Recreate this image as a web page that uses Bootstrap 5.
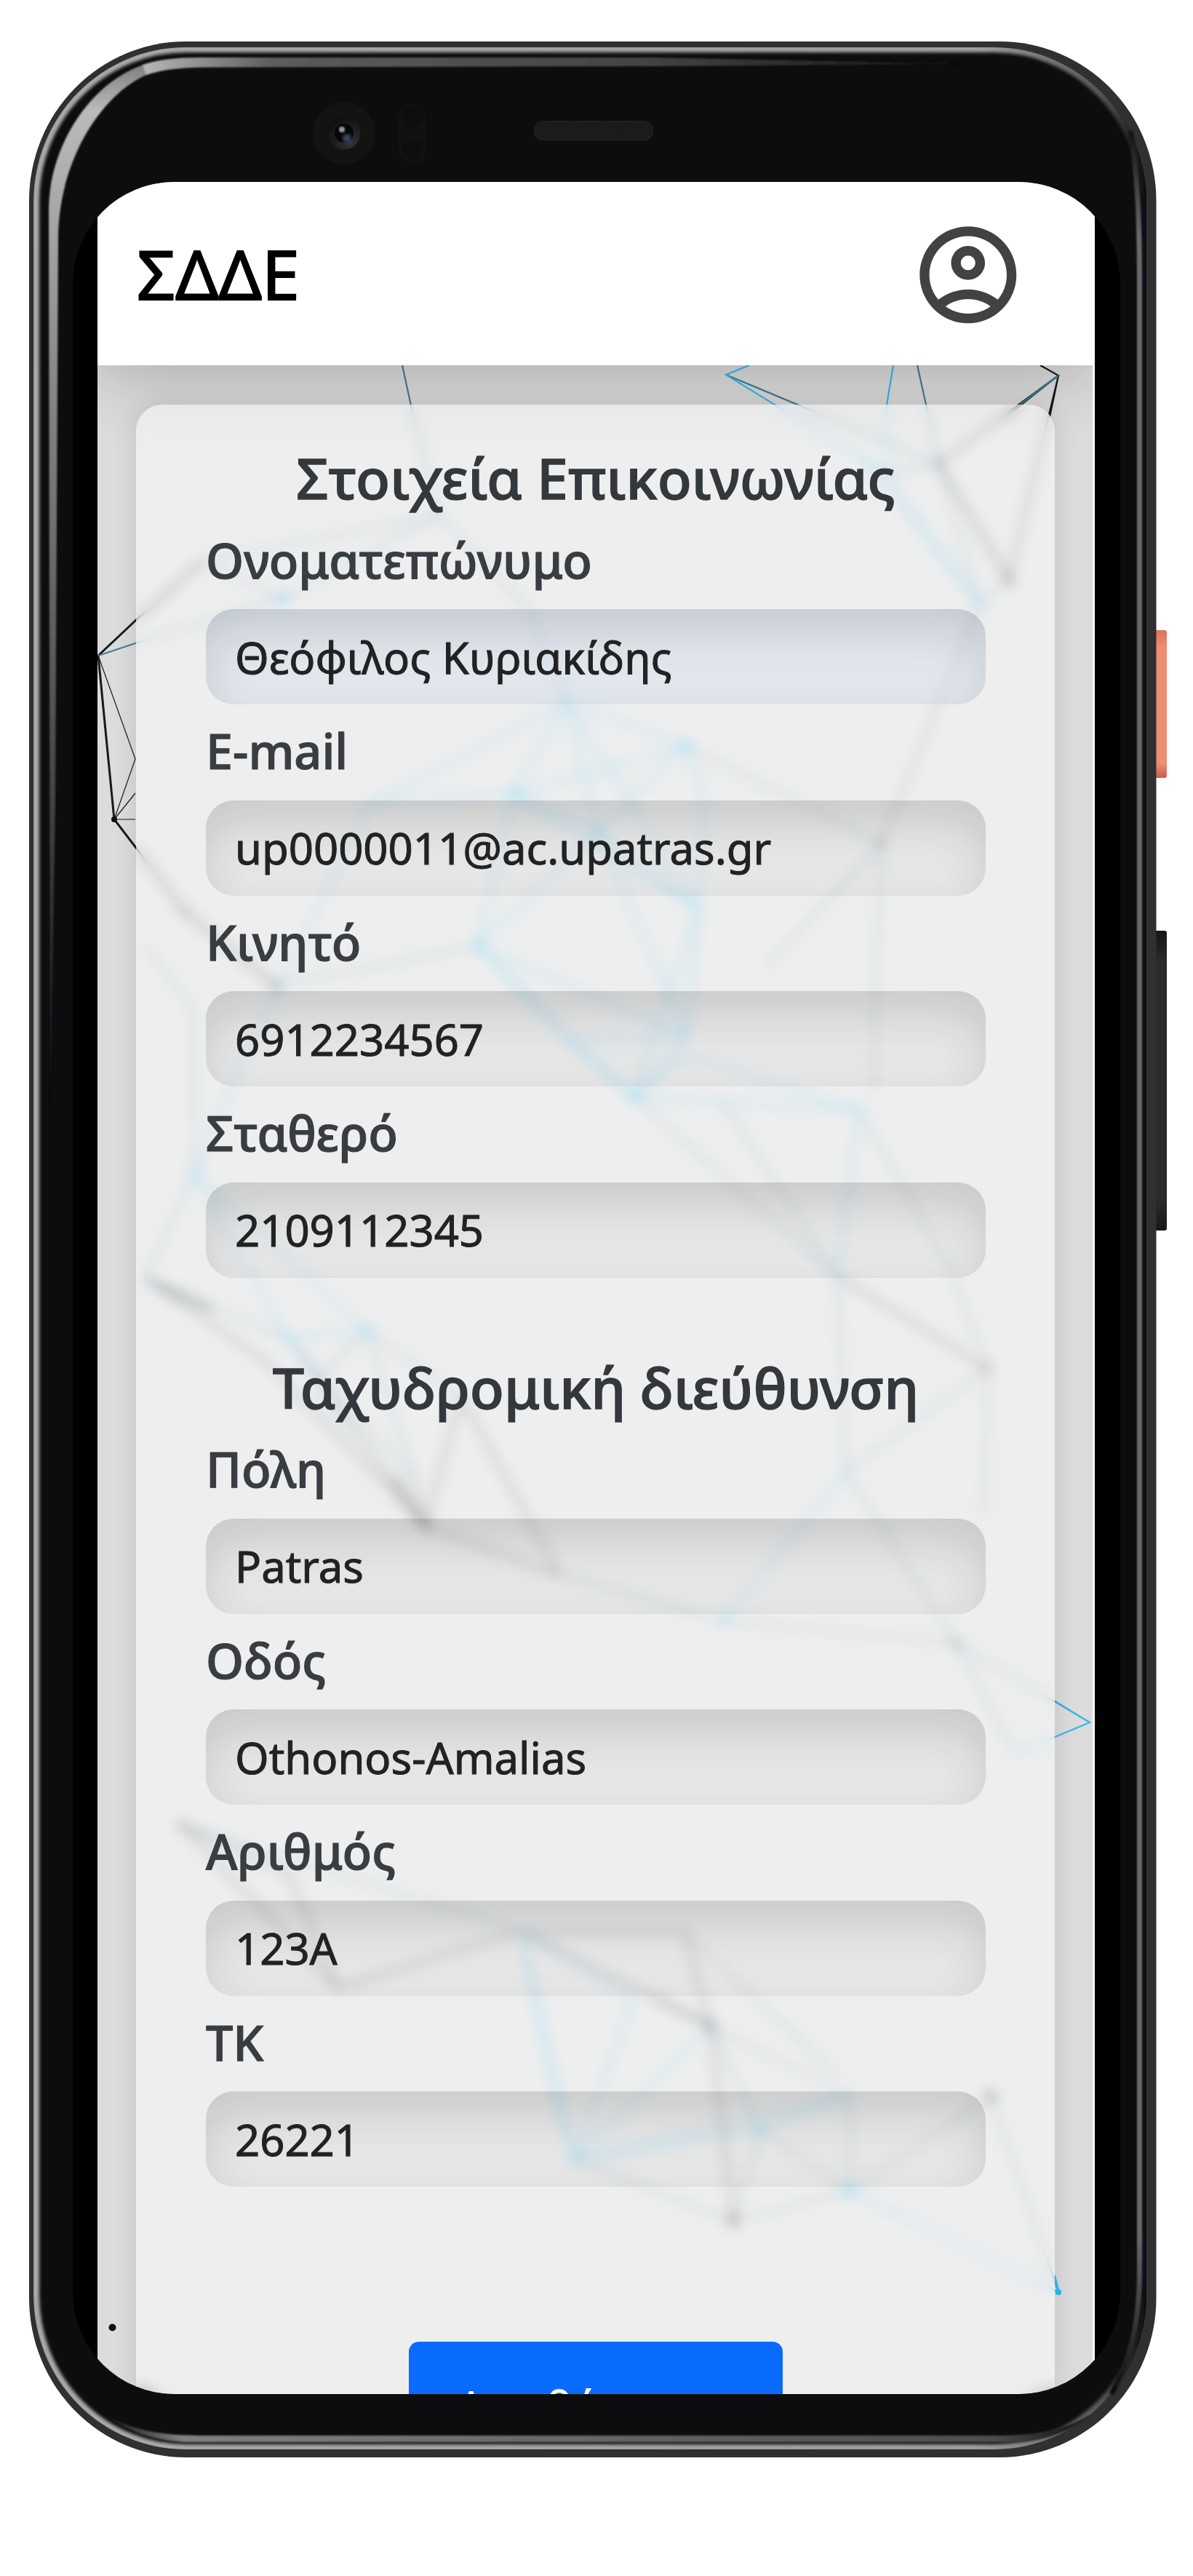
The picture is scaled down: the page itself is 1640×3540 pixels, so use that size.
<!DOCTYPE html>
<html lang="el">
<head>
<meta charset="utf-8">
<title>ΣΔΔΕ</title>
<link href="https://cdn.jsdelivr.net/npm/bootstrap@5.3.0/dist/css/bootstrap.min.css" rel="stylesheet">
<style>
body{background:#fff;font-family:"Noto Sans",sans-serif;overflow:hidden}
.phone{width:1564px;height:3320px;margin:57px 0 0 40px;padding:193px 0 0 60px}
.phone-frame{left:0;top:0}
.screen{width:1440px;height:3040px;border-radius:140px;background:#000;padding:0 35px 0 34px}
.screen-view{width:1371px;height:3040px;background:#dcdcdc;border-right:3px solid #fff}
.topbar{height:252px;background:#fff;padding:0 91.500px 0 54px;box-shadow:0 12px 100px rgba(0,0,0,.24)}
.topbar svg{margin-top:3px}
.brand-name{font-size:93px;line-height:1;color:#000;-webkit-text-stroke:2px #000}
.net{left:0;top:0}
.panel{margin:54px 52px 0 53px;height:2760px;padding:53px 95px 0 96px;border-radius:36px;background:rgba(255,255,255,.5);backdrop-filter:blur(9px);box-shadow:0 0 34px rgba(0,0,0,.12)}
.panel h2{font-size:77.100px;line-height:95px;margin-bottom:14.500px;font-weight:500;color:#33383d;-webkit-text-stroke:1.400px #33383d;white-space:nowrap}
.panel .form-label{font-size:66.500px;line-height:100px;margin-bottom:18.500px;font-weight:500;color:#383d42;-webkit-text-stroke:1.200px #383d42}
.panel .form-control{height:131px;font-size:59.800px;padding:0 40px;border:0;border-radius:38px;color:#222;background:rgba(0,0,0,.03);box-shadow:inset 0 30px 64px rgba(0,0,0,.13);-webkit-text-stroke:1px #222}
.panel .form-control.auto{background:rgba(190,208,240,.24)}
.field{margin-bottom:13px}
.group-gap{margin-top:103px}
.save{width:514px;height:145px;margin-top:213px;font-size:65px;border-radius:14px;background:#0a6cff;border:0;line-height:1.5;padding:36px 0 0}
</style>
<script src="https://cdn.jsdelivr.net/npm/bootstrap@5.3.0/dist/js/bootstrap.bundle.min.js"></script>
</head>
<body>
<div class="phone position-relative">
<svg class="phone-frame position-absolute" width="1564" height="3320" viewBox="40 57 1564 3320">
<defs>
<linearGradient id="red" x2="0" y2="1"><stop stop-color="#dd735d"/><stop offset=".12" stop-color="#ee8e74"/><stop offset=".9" stop-color="#ee8e74"/><stop offset="1" stop-color="#c65f4e"/></linearGradient>
<linearGradient id="blk" x2="0" y2="1"><stop stop-color="#151515"/><stop offset=".1" stop-color="#2a2a2a"/><stop offset=".9" stop-color="#2a2a2a"/><stop offset="1" stop-color="#181818"/></linearGradient>
<linearGradient id="rim" gradientUnits="userSpaceOnUse" x1="46" x2="1576" y1="0" y2="0"><stop stop-color="#aaa"/><stop offset=".85" stop-color="#a0a0a0"/><stop offset=".96" stop-color="#555"/><stop offset="1" stop-color="#0d0d0f"/></linearGradient>
<linearGradient id="bandL" gradientUnits="userSpaceOnUse" x1="0" x2="0" y1="79" y2="1550"><stop stop-color="#777"/><stop offset=".05" stop-color="#bbb"/><stop offset=".3" stop-color="#888"/><stop offset="1" stop-color="#0d0d0f"/></linearGradient>
<linearGradient id="bandT" gradientUnits="userSpaceOnUse" x1="190" x2="1350" y1="0" y2="0"><stop stop-color="#bbb"/><stop offset=".16" stop-color="#5c5c5c"/><stop offset=".6" stop-color="#444"/><stop offset="1" stop-color="#0d0d0f"/></linearGradient>
<linearGradient id="bandR" gradientUnits="userSpaceOnUse" x1="0" x2="0" y1="170" y2="3290"><stop stop-color="#0d0d0f"/><stop offset=".05" stop-color="#6a6a6a"/><stop offset=".93" stop-color="#6a6a6a"/><stop offset="1" stop-color="#0d0d0f"/></linearGradient>
<linearGradient id="bandB" gradientUnits="userSpaceOnUse" x1="140" x2="1500" y1="0" y2="0"><stop stop-color="#0d0d0f"/><stop offset=".08" stop-color="#808080"/><stop offset=".9" stop-color="#4e4e4e"/><stop offset="1" stop-color="#0d0d0f"/></linearGradient>
<radialGradient id="lens" cx=".7" cy=".8" r=".9"><stop stop-color="#333338"/><stop offset="1" stop-color="#0c0c0e"/></radialGradient>
<pattern id="mesh" width="4" height="4" patternUnits="userSpaceOnUse"><rect width="4" height="4" fill="#111"/><path d="M0 0L4 4M4 0L0 4" stroke="#2b2b2b" stroke-width=".8"/></pattern>
<filter id="s1" x="-5%" y="-5%" width="110%" height="110%"><feGaussianBlur stdDeviation="2.2"/></filter>
<filter id="s2" x="-5%" y="-5%" width="110%" height="110%"><feGaussianBlur stdDeviation=".8"/></filter>
<clipPath id="inner"><rect x="46" y="65" width="1530" height="3301" rx="209" ry="212"/></clipPath>
</defs>
<rect x="1580" y="866" width="24" height="203" rx="3" fill="url(#red)"/>
<rect x="1580" y="1279" width="24" height="412" rx="3" fill="url(#blk)"/>
<rect x="40" y="57" width="1549.500" height="3320" rx="215" ry="219" fill="#303030"/>
<rect x="46" y="65" width="1530" height="3301" rx="209" ry="212" fill="#0d0d0f"/>
<g clip-path="url(#inner)"><rect x="49" y="67" width="1524" height="3297" rx="206" ry="210" fill="none" stroke="url(#rim)" stroke-width="10" filter="url(#s1)"/></g>
<g filter="url(#s2)">
<path d="M69 1550L67 290C67 200 125 112 200 88L206 101C145 124 80 215 80 330L76 1100Z" fill="url(#bandL)"/>
<path d="M196 89C220 81 245 79 275 79L900 79L1350 88L900 91L280 92.500C250 93 225 95 201 103Z" fill="url(#bandT)"/>
<path d="M1554 180C1564 240 1566.500 300 1566.500 400V3120C1566.500 3190 1555 3240 1528 3290" fill="none" stroke="url(#bandR)" stroke-width="7"/>
<path d="M140 3315C180 3340 220 3347 280 3347H1380C1430 3346 1465 3338 1500 3318C1465 3346 1430 3356 1390 3356H260C215 3355 175 3343 140 3315Z" fill="url(#bandB)"/>
</g>
<circle cx="473" cy="183" r="43" fill="#131313"/><circle cx="473" cy="183" r="22.500" fill="url(#lens)"/><circle cx="473" cy="183" r="13" fill="#060608"/>
<circle cx="477" cy="190" r="6" fill="#3a4468" filter="url(#s1)"/><circle cx="470" cy="178" r="4" fill="#999" filter="url(#s2)"/>
<rect x="548" y="143" width="37" height="82" rx="18.500" fill="#111112"/><circle cx="567" cy="161" r="14" fill="#0e0e0f"/><circle cx="567" cy="206" r="14" fill="#0e0e0f"/>
<rect x="734.500" y="166.500" width="163" height="26" rx="12" fill="url(#mesh)" stroke="#252525"/>
</svg>
<div class="screen overflow-hidden position-relative">
<div class="screen-view position-relative overflow-hidden">
<svg class="net position-absolute" width="1371" height="3040" viewBox="134 250 1371 3040" fill="none" stroke-width="2.200">
<g stroke="#151a1d">
<path d="M1430 502L1455 516L1290 637M1455 516L1387 797M1455 516L1380 575M1455 516L1443 573"/>
<path d="M1290 637L1387 797M186 853L135 901L157 1126L255 1254L379 1354M186 853L279 771" stroke-width="3"/>
<path d="M135 901L186 1043L157 1126L186 1090M157 1126H186" stroke-width="1.200"/>
<path d="M1211 1159L1347 831" stroke-width="1.300"/>
<path d="M1151 1754L1357 1880M633 1919L585 2098M568 2029L585 2098L769 2164M396 1839L585 2098M199 1756L364 1870L585 2098M633 1919L769 2164M940 2654L977 2784M716 2654L977 2784L1008 3052M250 2508L464 2732L716 2654L940 2654M396 2574L464 2732M250 2508L396 2574" stroke-width="2.200"/>
<path d="M200 1758L290 1800M540 2030L585 2098M900 2745L977 2784" stroke-width="4"/>
</g>
<g stroke="#3f7f98" stroke-width="2.200">
<path d="M553 502L571 585L604 708M1261 502L1273 556L1290 637M998 515L1290 637L1218 650M1402 556L1455 516M186 884L135 901"/>
<path d="M279 771L604 708L389 822L279 771M604 708L725 834L779 965M186 884L389 822M1347 831L1290 637M1387 797L1347 831M944 1025L1211 1159L1200 1500M1211 1159L1054 1327M379 1354L657 1300M199 1756L267 1613M199 1756L396 1839M1357 1880L1163 2023L1315 2258L1498 2367M1315 2258L1395 2410M994 2227L1315 2258M769 2164L994 2227M870 1507L1151 1754M990 1510L1151 1754M1181 1526L1305 1740L1357 1880L1352 2086M1151 1754L1163 2023M505 1829L633 1919M505 1829L568 2029M396 1839L568 2029M505 1829L430 1900M250 2508L716 2654M977 2784L1045 2927L1168 3011M1008 3052L1168 3011M790 2968L1008 3052L1045 2927M977 2784L1168 2880M940 2654L1150 2850M1362 2881L1455 3150M1362 2881L1168 3011L1168 2880M200 1300L265 1385L267 1613" stroke-width="1.900"/>
</g>
<g stroke="#35b9ee" stroke-width="2.200">
<path d="M1030 502L998 515L1218 650L1219 556L1228 502M1218 650L1347 831L1180 625M1395 2410L1498 2367L1449 2337M1168 3011L1455 3150"/>
<path d="M1449 3127L1455 3150" stroke-width="4"/>
<path d="M779 965L944 1025L967 1091L960 1250L945 1424L870 1507L657 1300L822 1142L944 1025L706 1091L657 1300M779 965L706 1091L822 1142L779 965L507 1105L706 1091M657 1300L944 1025M945 1424L822 1142L960 1250L779 965M870 1507L945 1450L1181 1526L870 1507M945 1424L960 1250M706 1091L960 1250M779 1430L657 1300L945 1424L779 1430L870 1507M1181 1526L1151 1754M267 1613L396 1839L505 1829L267 1613M1163 2023L994 2227M716 2654L790 2968L977 2784M790 2968L1168 2880L1045 2927M716 2654L766 2895L790 2968L1045 2927M507 1105L323 1482L267 1613M870 1507L960 1250M716 2654L870 2750L790 2968M396 1839L480 1960" stroke-width="2.300"/>
</g>
<g fill="#111"><circle cx="1290" cy="637" r="4"/><circle cx="1387" cy="797" r="5.500"/><circle cx="1211" cy="1159" r="4"/><circle cx="379" cy="1354" r="5"/><circle cx="1357" cy="1880" r="4"/><circle cx="1315" cy="2258" r="4"/><circle cx="977" cy="2784" r="5.500"/><circle cx="1008" cy="3052" r="6"/><circle cx="1362" cy="2881" r="6"/><circle cx="250" cy="2508" r="4"/><circle cx="585" cy="2098" r="4"/><circle cx="255" cy="1254" r="4"/><circle cx="157" cy="1126" r="4"/><circle cx="154.500" cy="3198.500" r="5"/></g>
<g fill="#26b9f4"><circle cx="389" cy="822" r="7"/><circle cx="1218" cy="650" r="4"/><circle cx="1347" cy="831" r="5"/><circle cx="944" cy="1025" r="6"/><circle cx="706" cy="1091" r="6"/><circle cx="822" cy="1142" r="5"/><circle cx="657" cy="1300" r="6"/><circle cx="870" cy="1507" r="6"/><circle cx="1181" cy="1526" r="4"/><circle cx="267" cy="1613" r="5"/><circle cx="396" cy="1839" r="5"/><circle cx="505" cy="1829" r="6"/><circle cx="994" cy="2227" r="5"/><circle cx="790" cy="2968" r="5"/><circle cx="1168" cy="3011" r="7"/><circle cx="1045" cy="2927" r="5"/><circle cx="1455" cy="3150" r="4"/></g>
</svg>
<header class="topbar d-flex align-items-center justify-content-between position-relative">
<span class="brand-name">ΣΔΔΕ</span>
<svg width="159.600" height="159.600" viewBox="0 0 24 24" fill="#424242"><path d="M12 2C6.480 2 2 6.480 2 12s4.480 10 10 10 10-4.480 10-10S17.520 2 12 2zM7.350 18.500C8.660 17.560 10.260 17 12 17s3.340.560 4.650 1.500c-1.310.940-2.910 1.500-4.650 1.500s-3.340-.560-4.650-1.500zm10.790-1.380C16.450 15.800 14.320 15 12 15s-4.450.800-6.140 2.120C4.700 15.730 4 13.950 4 12c0-4.420 3.580-8 8-8s8 3.580 8 8c0 1.950-.700 3.730-1.860 5.120zM12 6c-1.930 0-3.500 1.570-3.500 3.500S10.070 13 12 13s3.500-1.570 3.500-3.500S13.930 6 12 6zm0 5c-.830 0-1.500-.670-1.500-1.500S11.170 8 12 8s1.500.670 1.500 1.500S12.830 11 12 11z"/></svg>
</header>
<form class="panel position-relative">
<h2 class="text-center">Στοιχεία Επικοινωνίας</h2>
<div class="field"><label class="form-label d-block">Ονοματεπώνυμο</label><input class="form-control auto" value="Θεόφιλος Κυριακίδης"></div>
<div class="field"><label class="form-label d-block">E-mail</label><input class="form-control" value="up0000011@ac.upatras.gr"></div>
<div class="field"><label class="form-label d-block">Κινητό</label><input class="form-control" value="6912234567"></div>
<div class="field mb-0"><label class="form-label d-block">Σταθερό</label><input class="form-control" value="2109112345"></div>
<h2 class="text-center group-gap">Ταχυδρομική διεύθυνση</h2>
<div class="field"><label class="form-label d-block">Πόλη</label><input class="form-control" value="Patras"></div>
<div class="field"><label class="form-label d-block">Οδός</label><input class="form-control" value="Othonos-Amalias"></div>
<div class="field"><label class="form-label d-block">Αριθμός</label><input class="form-control" value="123A"></div>
<div class="field"><label class="form-label d-block">ΤΚ</label><input class="form-control" value="26221"></div>
<button type="button" class="btn btn-primary save d-block mx-auto">Αποθήκευση</button>
</form>
</div>
</div>
</div>
</body>
</html>
